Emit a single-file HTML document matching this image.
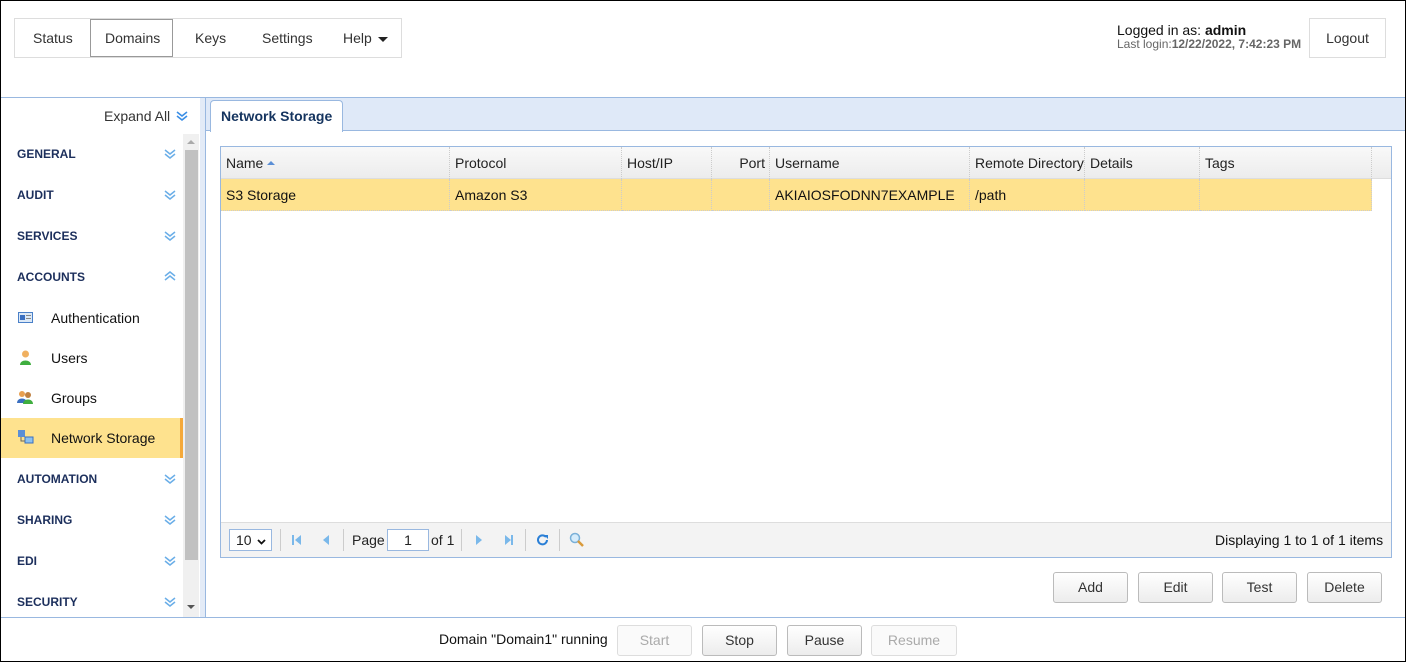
<!DOCTYPE html>
<html><head><style>
*{box-sizing:border-box;margin:0;padding:0}
body{width:1406px;height:662px;overflow:hidden;font-family:"Liberation Sans",Arial,sans-serif;font-size:14px;color:#222;background:#fff;position:relative}
.a{position:absolute}
#frame{left:0;top:0;width:1406px;height:662px;border:1px solid #000;pointer-events:none;z-index:10}
.nav{left:14px;top:18px;width:388px;height:40px;border:1px solid #ddd}
.nav span{position:absolute;top:11px;color:#333}
.sec{left:17px;font-weight:bold;font-size:12px;color:#1c2f5c}
.chev{left:163px;width:14px;height:12px}
.sub{left:51px;color:#111}
.th{top:147px;height:32px;line-height:32px;border-right:1px dotted #ccc;padding-left:5px;color:#222}
.td{top:179px;height:32px;line-height:32px;border-right:1px dotted #ccc;border-bottom:1px dotted #ccc;padding-left:5px;background:#fee28e;color:#111}
.btn{height:31px;border:1px solid #bbb;border-radius:3px;background:linear-gradient(#fff,#ececec);text-align:center;line-height:29px;color:#333}
.dis{color:#aaa;border-color:#ddd;background:#fafafa}
.sep{top:529px;width:1px;height:22px;background:#ccc}
</style></head><body>
<div class="a" id="frame"></div>
<div class="a nav">
<span style="left:18px">Status</span>
<div class="a" style="left:75px;top:0;width:83px;height:38px;border:1px solid #999"></div>
<span style="left:90px">Domains</span>
<span style="left:180px">Keys</span>
<span style="left:247px">Settings</span>
<span style="left:328px">Help</span>
<div class="a" style="left:363px;top:18px;border-left:5px solid transparent;border-right:5px solid transparent;border-top:5px solid #222"></div>
</div>
<div class="a" style="left:1117px;top:22px;color:#111">Logged in as: <b>admin</b></div>
<div class="a" style="left:1117px;top:37px;font-size:12px;color:#666">Last login:<b>12/22/2022, 7:42:23 PM</b></div>
<div class="a" style="left:1309px;top:18px;width:77px;height:40px;border:1px solid #ddd;text-align:center;line-height:38px;color:#333">Logout</div>

<div class="a" style="left:0;top:97px;width:1406px;height:1px;background:#99b8e0"></div>
<div class="a" style="left:200px;top:98px;width:5px;height:519px;background:#e3ebf7"></div>
<div class="a" style="left:205px;top:98px;width:1px;height:519px;background:#99b8e0"></div>
<div class="a" style="left:104px;top:108px;color:#333">Expand All</div>
<svg class="a" style="left:176px;top:110px" width="12" height="12" viewBox="0 0 12 12"><path d="M1 2l5 4 5-4M1 6l5 4 5-4" fill="none" stroke="#3a8ee6" stroke-width="1.6"/></svg>
<div class="a" style="left:183px;top:134px;width:16px;height:483px;background:#f0f0f0"></div>
<div class="a" style="left:185px;top:150px;width:13px;height:410px;background:#c1c1c1"></div>
<div class="a" style="left:187px;top:140px;border-left:4px solid transparent;border-right:4px solid transparent;border-bottom:4px solid #aaa"></div>
<div class="a" style="left:187px;top:605px;border-left:4px solid transparent;border-right:4px solid transparent;border-top:4px solid #555"></div>

<div class="a sec" style="top:147px">GENERAL</div>
<div class="a sec" style="top:188px">AUDIT</div>
<div class="a sec" style="top:229px">SERVICES</div>
<div class="a sec" style="top:270px">ACCOUNTS</div>
<div class="a sec" style="top:472px">AUTOMATION</div>
<div class="a sec" style="top:513px">SHARING</div>
<div class="a sec" style="top:554px">EDI</div>
<div class="a sec" style="top:595px">SECURITY</div>
<svg class="a chev" style="top:148px" viewBox="0 0 14 12"><path d="M2 2l5 4 5-4M2 6l5 4 5-4" fill="none" stroke="#6aaee8" stroke-width="1.5"/></svg>
<svg class="a chev" style="top:189px" viewBox="0 0 14 12"><path d="M2 2l5 4 5-4M2 6l5 4 5-4" fill="none" stroke="#6aaee8" stroke-width="1.5"/></svg>
<svg class="a chev" style="top:230px" viewBox="0 0 14 12"><path d="M2 2l5 4 5-4M2 6l5 4 5-4" fill="none" stroke="#6aaee8" stroke-width="1.5"/></svg>
<svg class="a chev" style="top:270px" viewBox="0 0 14 12"><path d="M2 6l5-4 5 4M2 10l5-4 5 4" fill="none" stroke="#6aaee8" stroke-width="1.5"/></svg>
<svg class="a chev" style="top:473px" viewBox="0 0 14 12"><path d="M2 2l5 4 5-4M2 6l5 4 5-4" fill="none" stroke="#6aaee8" stroke-width="1.5"/></svg>
<svg class="a chev" style="top:514px" viewBox="0 0 14 12"><path d="M2 2l5 4 5-4M2 6l5 4 5-4" fill="none" stroke="#6aaee8" stroke-width="1.5"/></svg>
<svg class="a chev" style="top:555px" viewBox="0 0 14 12"><path d="M2 2l5 4 5-4M2 6l5 4 5-4" fill="none" stroke="#6aaee8" stroke-width="1.5"/></svg>
<svg class="a chev" style="top:596px" viewBox="0 0 14 12"><path d="M2 2l5 4 5-4M2 6l5 4 5-4" fill="none" stroke="#6aaee8" stroke-width="1.5"/></svg>

<div class="a" style="left:1px;top:418px;width:182px;height:40px;background:#fee28e;border-right:3px solid #f5a93a"></div>
<svg class="a" style="left:18px;top:311px" width="15" height="13"><rect x="0.5" y="1.5" width="14" height="10" fill="#dce9f7" stroke="#4a80c8"/><rect x="2" y="4" width="5" height="5" fill="#3a6fc0"/><rect x="8" y="4" width="5" height="1" fill="#888"/><rect x="8" y="7" width="5" height="1" fill="#888"/></svg>
<svg class="a" style="left:19px;top:350px" width="13" height="15"><circle cx="6.5" cy="4" r="3.5" fill="#f0b060"/><path d="M1 15c0-6 11-6 11 0z" fill="#3fae3f"/></svg>
<svg class="a" style="left:17px;top:390px" width="16" height="15"><circle cx="5" cy="4" r="3" fill="#e8a050"/><path d="M0 13c0-6 10-6 10 0z" fill="#3a6fc0"/><circle cx="11" cy="5" r="3" fill="#c08040"/><path d="M6 14c0-6 10-6 10 0z" fill="#3fae3f"/></svg>
<svg class="a" style="left:18px;top:430px" width="16" height="15"><rect x="0" y="0" width="7" height="7" fill="#5b8fd6"/><rect x="7" y="7" width="8" height="6" fill="#8cc0ee" stroke="#3a6fc0"/><path d="M3 7v4h4" stroke="#666" fill="none"/></svg>
<div class="a sub" style="top:310px">Authentication</div>
<div class="a sub" style="top:350px">Users</div>
<div class="a sub" style="top:390px">Groups</div>
<div class="a sub" style="top:430px">Network Storage</div>

<div class="a" style="left:206px;top:98px;width:1199px;height:33px;background:#dfe9f8;border-bottom:1px solid #99b8e0"></div>
<div class="a" style="left:210px;top:100px;width:133px;height:32px;background:#fff;border:1px solid #99b8e0;border-bottom:none;border-radius:4px 4px 0 0;font-weight:bold;color:#15345f;line-height:30px;padding-left:10px">Network Storage</div>

<div class="a" style="left:220px;top:146px;width:1172px;height:412px;border:1px solid #99b8e0"></div>
<div class="a" style="left:221px;top:147px;width:1170px;height:32px;background:linear-gradient(#f9f9f9,#ececec);border-bottom:1px solid #ddd"></div>
<div class="a th" style="left:221px;width:229px">Name <span style="display:inline-block;border-left:4px solid transparent;border-right:4px solid transparent;border-bottom:4px solid #5b8fd6;vertical-align:3px"></span></div>
<div class="a th" style="left:450px;width:172px">Protocol</div>
<div class="a th" style="left:622px;width:90px">Host/IP</div>
<div class="a th" style="left:712px;width:58px;text-align:right;padding-right:4px">Port</div>
<div class="a th" style="left:770px;width:200px">Username</div>
<div class="a th" style="left:970px;width:115px">Remote Directory</div>
<div class="a th" style="left:1085px;width:115px">Details</div>
<div class="a th" style="left:1200px;width:172px">Tags</div>
<div class="a td" style="left:221px;width:229px">S3 Storage</div>
<div class="a td" style="left:450px;width:172px">Amazon S3</div>
<div class="a td" style="left:622px;width:90px"></div>
<div class="a td" style="left:712px;width:58px"></div>
<div class="a td" style="left:770px;width:200px">AKIAIOSFODNN7EXAMPLE</div>
<div class="a td" style="left:970px;width:115px">/path</div>
<div class="a td" style="left:1085px;width:115px"></div>
<div class="a td" style="left:1200px;width:172px"></div>

<div class="a" style="left:221px;top:522px;width:1170px;height:35px;background:#f3f3f3;border-top:1px solid #ddd"></div>
<div class="a" style="left:229px;top:529px;width:43px;height:22px;background:#fff;border:1px solid #99b8e0;font-size:14px;line-height:20px;padding-left:6px">10 <svg width="9" height="6" style="margin-left:2px"><path d="M1 1l3.5 3.5L8 1" stroke="#111" stroke-width="1.8" fill="none"/></svg></div>
<div class="a sep" style="left:280px"></div>
<svg class="a" style="left:292px;top:534px" width="10" height="12"><rect x="0" y="1" width="2" height="10" fill="#7ab8ea"/><path d="M9 1v10L3 6z" fill="#7ab8ea"/></svg>
<svg class="a" style="left:322px;top:534px" width="8" height="12"><path d="M7 1v10L1 6z" fill="#7ab8ea"/></svg>
<div class="a sep" style="left:343px"></div>
<div class="a" style="left:352px;top:532px">Page</div>
<div class="a" style="left:387px;top:529px;width:42px;height:22px;background:#fff;border:1px solid #99b8e0;text-align:center;line-height:20px">1</div>
<div class="a" style="left:431px;top:532px">of 1</div>
<div class="a sep" style="left:461px"></div>
<svg class="a" style="left:475px;top:534px" width="8" height="12"><path d="M1 1v10L7 6z" fill="#7ab8ea"/></svg>
<svg class="a" style="left:504px;top:534px" width="10" height="12"><path d="M1 1v10L7 6z" fill="#7ab8ea"/><rect x="7" y="1" width="2" height="10" fill="#7ab8ea"/></svg>
<div class="a sep" style="left:525px"></div>
<svg class="a" style="left:536px;top:533px" width="13" height="13"><path d="M10 4A4.5 4.5 0 1 0 11 7" fill="none" stroke="#2a7fd6" stroke-width="2"/><path d="M8 2h4v4z" fill="#2a7fd6"/></svg>
<div class="a sep" style="left:559px"></div>
<svg class="a" style="left:569px;top:532px" width="16" height="16"><circle cx="6" cy="6" r="4.5" fill="#d6ecfb" stroke="#7ab0d8" stroke-width="1.5"/><path d="M9 9l5 5" stroke="#d99a3a" stroke-width="2.5"/></svg>
<div class="a" style="left:1215px;top:532px;color:#111">Displaying 1 to 1 of 1 items</div>

<div class="a btn" style="left:1053px;top:572px;width:75px">Add</div>
<div class="a btn" style="left:1138px;top:572px;width:75px">Edit</div>
<div class="a btn" style="left:1222px;top:572px;width:75px">Test</div>
<div class="a btn" style="left:1307px;top:572px;width:75px">Delete</div>

<div class="a" style="left:0;top:617px;width:1406px;height:1px;background:#99b8e0"></div>
<div class="a" style="left:439px;top:631px;color:#111">Domain "Domain1" running</div>
<div class="a btn dis" style="left:617px;top:625px;width:75px">Start</div>
<div class="a btn" style="left:702px;top:625px;width:75px">Stop</div>
<div class="a btn" style="left:787px;top:625px;width:75px">Pause</div>
<div class="a btn dis" style="left:871px;top:625px;width:86px">Resume</div>
</body></html>
